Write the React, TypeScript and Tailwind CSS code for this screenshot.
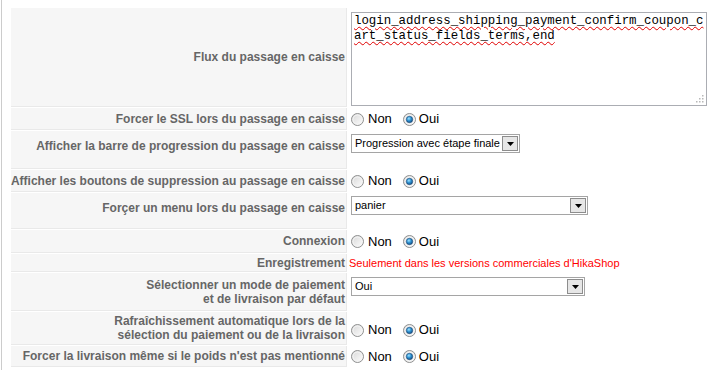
import * as React from "react";

// Windows-style radio button
const Radio = ({ checked }: { checked?: boolean }) => (
  <svg width="13" height="13" viewBox="0 0 13 13" className="shrink-0">
    <defs>
      <linearGradient id="radioBg" x1="0" y1="0" x2="1" y2="1">
        <stop offset="0" stopColor="#d6d6d6" />
        <stop offset="1" stopColor="#ffffff" />
      </linearGradient>
      <radialGradient id="radioDot" cx="0.4" cy="0.35" r="0.7">
        <stop offset="0" stopColor="#9fe3ff" />
        <stop offset="0.5" stopColor="#2a8fd0" />
        <stop offset="1" stopColor="#164a7a" />
      </radialGradient>
    </defs>
    <circle cx="6.5" cy="6.5" r="6" fill="url(#radioBg)" stroke="#8e8f8f" />
    <circle cx="6.5" cy="6.5" r="4.5" fill="none" stroke="#f4f4f4" />
    {checked && <circle cx="6.5" cy="6.5" r="3.2" fill="url(#radioDot)" stroke="#1b4a7a" strokeWidth="0.6" />}
  </svg>
);

const YesNo = () => (
  <div className="flex items-center text-[13px] text-black">
    <span className="ml-[3px]">
      <Radio />
    </span>
    <span className="ml-[4px] mr-[11px]">Non</span>
    <Radio checked />
    <span className="ml-[3px]">Oui</span>
  </div>
);

const Select = ({ value, width }: { value: string; width: string }) => (
  <div
    className={`ml-[3px] flex h-[19px] items-center justify-between border border-[#a5a5a5] bg-white text-[11px] text-black ${width}`}
  >
    <span className="pl-[3px]">{value}</span>
    <span className="mr-[1px] flex h-[15px] w-[16px] items-center justify-center border border-[#8d8d8d] bg-[#e6e6e6]">
      <svg width="7" height="4" viewBox="0 0 7 4">
        <path d="M0 0h7L3.5 4z" fill="#000" />
      </svg>
    </span>
  </div>
);

const Textarea = () => (
  <div className="relative ml-[3px] h-[94px] w-[356px] border border-[#abadb3] bg-white pl-[2px] pt-[1px] font-['Liberation_Mono','Courier_New',monospace] text-[12.4px] leading-[15px] text-black">
    <div className="underline decoration-[#e00000] decoration-wavy decoration-1 underline-offset-[2px]">
      login_address_shipping_payment_confirm_coupon_c
    </div>
    <div className="underline decoration-[#e00000] decoration-wavy decoration-1 underline-offset-[2px]">
      art_status_fields_terms,end
    </div>
    <svg width="9" height="9" viewBox="0 0 9 9" className="absolute bottom-[2px] right-[2px]">
      <rect x="7" y="1" width="1.5" height="1.5" fill="#b8b8b8" />
      <rect x="4" y="4" width="1.5" height="1.5" fill="#b8b8b8" />
      <rect x="7" y="4" width="1.5" height="1.5" fill="#b8b8b8" />
      <rect x="1" y="7" width="1.5" height="1.5" fill="#b8b8b8" />
      <rect x="4" y="7" width="1.5" height="1.5" fill="#b8b8b8" />
      <rect x="7" y="7" width="1.5" height="1.5" fill="#b8b8b8" />
    </svg>
  </div>
);

interface IRow {
  label: React.ReactNode;
  height: string;
  labelClass?: string;
  valueClass?: string;
  value: React.ReactNode;
}

const rows: IRow[] = [
  { label: "Flux du passage en caisse", height: "h-[99px]", valueClass: "items-start pt-[4px]", value: <Textarea /> },
  { label: "Forcer le SSL lors du passage en caisse", height: "h-[22px]", value: <YesNo /> },
  {
    label: "Afficher la barre de progression du passage en caisse",
    height: "h-[38px]",
    labelClass: "pb-[8px]",
    valueClass: "items-start pt-[3px]",
    value: <Select value="Progression avec étape finale" width="w-[169px]" />,
  },
  { label: "Afficher les boutons de suppression au passage en caisse", height: "h-[22px]", value: <YesNo /> },
  {
    label: "Forçer un menu lors du passage en caisse",
    height: "h-[36px]",
    labelClass: "pb-[5px]",
    valueClass: "items-start pt-[3px]",
    value: <Select value="panier" width="w-[237px]" />,
  },
  { label: "Connexion", height: "h-[23px]", value: <YesNo /> },
  {
    label: "Enregistrement",
    height: "h-[18px]",
    value: <span className="ml-[1px] text-[11px] text-[#ff0000]">Seulement dans les versions commerciales d'HikaShop</span>,
  },
  {
    label: (
      <>
        Sélectionner un mode de paiement
        <br />
        et de livraison par défaut
      </>
    ),
    height: "h-[38px]",
    valueClass: "items-start pt-[4px]",
    value: <Select value="Oui" width="w-[234px]" />,
  },
  {
    label: (
      <>
        Rafraîchissement automatique lors de la
        <br />
        sélection du paiement ou de la livraison
      </>
    ),
    height: "h-[33px]",
    valueClass: "pt-[3px]",
    value: <YesNo />,
  },
  { label: "Forcer la livraison même si le poids n'est pas mentionné", height: "h-[21px]", value: <YesNo /> },
];

export default function App() {
  return (
    <div className="h-[370px] w-[718px] overflow-hidden bg-white pl-[1px] font-['Liberation_Sans',Arial,sans-serif]">
      <div className="h-full border-l border-[#cccccc] pl-[9px] pt-[8px]">
        <div className="flex flex-col gap-[1px]">
          {rows.map((row, i) => (
            <div key={i} className={`flex ${row.height}`}>
              <div
                className={`flex w-[336px] shrink-0 items-center justify-end whitespace-nowrap border-b border-r border-[#e9e9e9] bg-[#f6f6f6] pr-[1px] text-right text-[12px] font-bold leading-[14px] text-[#666666] ${row.labelClass ?? ""}`}
              >
                <div>{row.label}</div>
              </div>
              <div className={`ml-[1px] flex flex-1 items-center ${row.valueClass ?? ""}`}>{row.value}</div>
            </div>
          ))}
        </div>
      </div>
    </div>
  );
}
